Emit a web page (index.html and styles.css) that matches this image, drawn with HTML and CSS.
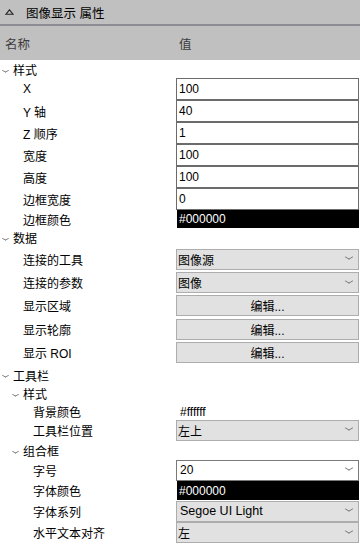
FILE: index.html
```html
<!DOCTYPE html>
<html lang="zh-CN">
<head>
  <meta charset="UTF-8">
  <meta name="viewport" content="width=device-width, initial-scale=1.0">
  <title>图像显示 属性</title>
  <link rel="stylesheet" href="styles.css">
</head>
<body>
<div id="panel">
  <div id="titlebar">
    <svg class="collapse" width="9" height="6" viewBox="0 0 9 6"><path d="M4.5 0.8 L8.2 5.3 L0.8 5.3 Z" fill="none" stroke="#222" stroke-width="1.1"/></svg>
    <span>图像显示 属性</span>
  </div>
  <div id="colhead">
    <div class="name">名称</div>
    <div class="value">值</div>
  </div>

  <div class="row cat lv0"><span class="arrow"></span>样式</div>
  <div class="row edit"><div class="label lv1">X</div><div class="cell"><div class="input">100</div></div></div>
  <div class="row edit"><div class="label lv1">Y 轴</div><div class="cell"><div class="input">40</div></div></div>
  <div class="row edit"><div class="label lv1">Z 顺序</div><div class="cell"><div class="input">1</div></div></div>
  <div class="row edit"><div class="label lv1">宽度</div><div class="cell"><div class="input">100</div></div></div>
  <div class="row edit"><div class="label lv1">高度</div><div class="cell"><div class="input">100</div></div></div>
  <div class="row edit"><div class="label lv1">边框宽度</div><div class="cell"><div class="input">0</div></div></div>
  <div class="row color"><div class="label lv1">边框颜色</div><div class="cell"><div class="swatch">#000000</div></div></div>

  <div class="row cat lv0 data"><span class="arrow"></span>数据</div>
  <div class="row pick"><div class="label lv1">连接的工具</div><div class="cell"><div class="combo">图像源<span class="chev"></span></div></div></div>
  <div class="row pick"><div class="label lv1">连接的参数</div><div class="cell"><div class="combo">图像<span class="chev"></span></div></div></div>
  <div class="row pick"><div class="label lv1">显示区域</div><div class="cell"><div class="button">编辑...</div></div></div>
  <div class="row pick"><div class="label lv1">显示轮廓</div><div class="cell"><div class="button">编辑...</div></div></div>
  <div class="row pick"><div class="label lv1">显示 ROI</div><div class="cell"><div class="button">编辑...</div></div></div>

  <div class="row cat lv0 tools"><span class="arrow"></span>工具栏</div>
  <div class="row cat lv1 sub"><span class="arrow"></span>样式</div>
  <div class="row plain"><div class="label lv2">背景颜色</div><div class="cell"><div class="text">#ffffff</div></div></div>
  <div class="row single"><div class="label lv2">工具栏位置</div><div class="cell"><div class="combo">左上<span class="chev"></span></div></div></div>
  <div class="row cat lv1 sub"><span class="arrow"></span>组合框</div>
  <div class="row single"><div class="label lv2">字号</div><div class="cell"><div class="combo open">20<span class="chev"></span></div></div></div>
  <div class="row color2"><div class="label lv2">字体颜色</div><div class="cell"><div class="swatch">#000000</div></div></div>
  <div class="row single"><div class="label lv2">字体系列</div><div class="cell"><div class="combo latin">Segoe UI Light<span class="chev"></span></div></div></div>
  <div class="row single last"><div class="label lv2">水平文本对齐</div><div class="cell"><div class="combo">左<span class="chev"></span></div></div></div>
</div>
</body>
</html>
```

FILE: styles.css
```css
body {
  margin: 0;
  font-family: "Liberation Sans", "Noto Sans CJK SC", sans-serif;
  font-size: 12px;
  color: #000;
  background: #fff;
}
#panel {
  width: 360px;
  height: 555px;
  overflow: hidden;
}
#titlebar {
  height: 24px;
  background: #c0c0c0;
  border-bottom: 2px solid #8c8c92;
  display: flex;
  align-items: center;
  font-size: 12.5px;
}
#titlebar .collapse {
  margin: 0 12px 0 5px;
}
#colhead {
  height: 34px;
  background: #c0c0c0;
  display: flex;
  align-items: center;
  color: #3c3c3c;
  font-size: 12.5px;
}
#colhead .name {
  width: 176px;
  padding-left: 5px;
  box-sizing: border-box;
}
#colhead .value {
  padding-left: 3px;
}

.row {
  display: flex;
  align-items: center;
  box-sizing: border-box;
}
.label {
  width: 176px;
  flex: none;
  box-sizing: border-box;
}
.cell {
  flex: 1;
  padding-right: 1px;
}
.lv0 { padding-left: 13px; }
.lv1 { padding-left: 23px; }
.lv2 { padding-left: 33px; }

.cat {
  position: relative;
  height: 18px;
}
.cat.data { height: 19px; }
.cat.tools { height: 20px; padding-top: 3px; }
.cat.sub { height: 19px; }
.arrow {
  position: absolute;
  top: 8px;
  width: 4px;
  height: 4px;
  border-right: 1px solid #707070;
  border-bottom: 1px solid #707070;
  transform: scale(1, 0.55) rotate(45deg);
}
.tools .arrow { top: 9px; }
.lv0 .arrow { left: 3px; }
.lv1 .arrow { left: 13px; }

.edit { height: 22px; }
.color { height: 18px; }
.color2 { height: 20px; }
.pick {
  height: 23.4px;
  padding-top: 1px;
}
.plain { height: 17px; }
.single { height: 21px; }
.single.last { height: 21.5px; }

.input {
  height: 22px;
  line-height: 20px;
  border: 1px solid #6b6b6b;
  padding-left: 2px;
  box-sizing: border-box;
  background: #fff;
}
.swatch {
  height: 100%;
  margin-left: 1px;
  background: #000;
  color: #fff;
  padding-left: 2px;
  display: flex;
  align-items: center;
}
.color .swatch { height: 18px; }
.color2 .swatch { height: 19px; }
.combo, .button {
  height: 21px;
  border: 1px solid #adadad;
  background: #e1e1e1;
  box-sizing: border-box;
  display: flex;
  align-items: center;
  padding-left: 1px;
}
.combo.open {
  background: #fff;
  border-color: #7a7a7a;
  padding-left: 3px;
}
.combo.latin {
  padding-left: 3px;
  font-size: 12.5px;
}
.button {
  justify-content: center;
  padding-left: 0;
}
.chev {
  margin-left: auto;
  margin-right: 6px;
  width: 5px;
  height: 5px;
  border-right: 1px solid #707070;
  border-bottom: 1px solid #707070;
  transform: translateY(-2px) scale(1, 0.6) rotate(45deg);
}
.text {
  padding-left: 4px;
  padding-top: 2px;
}
```
